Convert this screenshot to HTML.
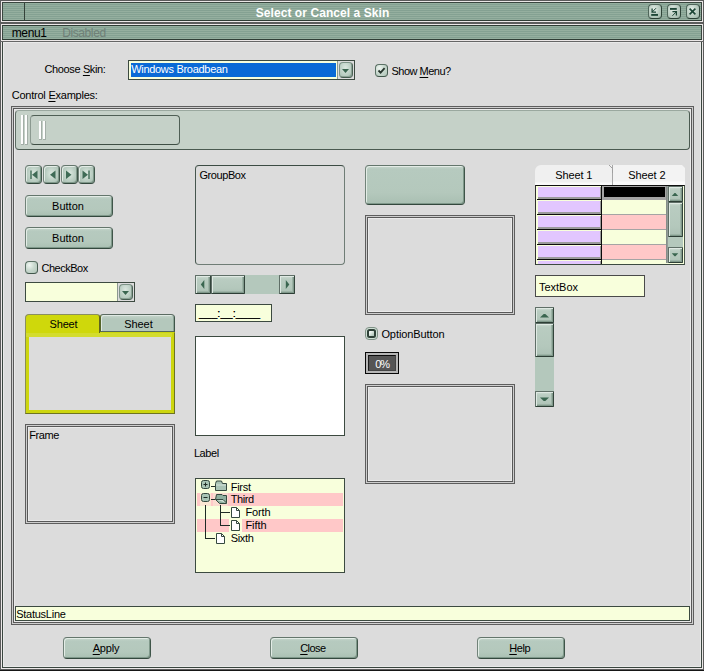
<!DOCTYPE html>
<html><head><meta charset="utf-8"><title>Select or Cancel a Skin</title>
<style>
html,body{margin:0;padding:0;}
body{width:704px;height:671px;position:relative;overflow:hidden;background:#dcdcdc;font-family:"Liberation Sans",sans-serif;font-size:11px;color:#000;}
.a{position:absolute;box-sizing:border-box;}
.t{position:absolute;white-space:nowrap;line-height:13px;height:13px;}
u{text-decoration:underline;text-underline-offset:1.5px;}
.stripe{background:repeating-linear-gradient(to bottom,#95af9f 0,#95af9f 1px,#84a192 1px,#84a192 2px);}
.btn{position:absolute;box-sizing:border-box;border-radius:4px;background:linear-gradient(to bottom,#c9d8cf 0,#b6cabf 3px,#b4c8bc 70%,#a9bfb2 100%);border:1px solid;border-color:#64766c #3f5549 #33483d #718379;box-shadow:inset 1px 1px 0 #e3ece6,inset -1px -1px 0 #7f988a;text-align:center;}
.dbl{position:absolute;box-sizing:border-box;border:1px solid #5e5e5e;box-shadow:inset 0 0 0 1px #cecece,inset 0 0 0 2px #595959,inset 0 0 0 3px #eaeaea;}
.sq{border-radius:1px;border-color:#5f6f67 #33443b #2d3e35 #5f6f67;box-shadow:inset 1px 1px 0 #dfe9e3,inset -1px -1px 0 #7f988a,inset -2px -2px 0 #9db3a6;background:linear-gradient(to bottom,#cfddd4 0,#b9ccc1 3px,#b4c8bc 70%,#abc0b4 100%);}
.chk{background:radial-gradient(ellipse at 32% 28%,#f0f6f2 0,#c9d9cf 45%,#b0c4b8 100%);border-color:#5b7165 #465c50 #40564a #5b7165;box-shadow:none;}
.dd{background:radial-gradient(ellipse at 45% 35%,#dce8e0 0,#bccfc4 55%,#a3baad 100%);border-color:#7d9387 #4b6155 #455b4f #7d9387;box-shadow:inset -1px -1px 0 #8aa194;}
.nav{background:radial-gradient(ellipse at 50% 45%,#dde9e1 0,#bccfc4 50%,#a3baad 100%);}
.tb{border-radius:4px;background:radial-gradient(ellipse at 40% 35%,#e4eee8 0,#bfd1c6 45%,#9cb5a7 100%);border-color:#4f665a #2f4439 #2a3f34 #4f665a;box-shadow:none;}
.ybox{position:absolute;box-sizing:border-box;background:#f8ffdc;border:1px solid #3c4a40;}
</style></head><body>

<!-- window borders -->
<div class="a" style="left:0;top:0;width:704px;height:671px;border:1px solid #5c5c5c;border-bottom-width:2px;"></div>
<div class="a" style="left:1px;top:1px;width:702px;height:668px;border:1px solid #ebe7e7;"></div>
<div class="a" style="left:2px;top:2px;width:700px;height:666px;border:1px solid #3a463f;"></div>

<!-- title bar -->
<div class="a stripe" style="left:3px;top:3px;width:698px;height:17px;"></div>
<div class="a" style="left:24px;top:3px;width:1px;height:17px;background:#34423a;"></div>
<div class="a" style="left:2px;top:20px;width:700px;height:1px;background:#2f3d35;"></div>
<div class="a" style="left:1px;top:21px;width:702px;height:1px;background:#ebe7e7;"></div>
<div class="a" style="left:1px;top:22px;width:702px;height:2px;background:#5c5c5c;"></div>
<div class="a" style="left:1px;top:24px;width:702px;height:1px;background:#ebe7e7;"></div>
<div class="a" style="left:2px;top:25px;width:700px;height:1px;background:#2f3d35;"></div>
<div class="a stripe" style="left:3px;top:26px;width:698px;height:13px;"></div>
<div class="a" style="left:2px;top:39px;width:700px;height:1px;background:#2f3d35;"></div>
<div class="a" style="left:1px;top:40px;width:702px;height:1px;background:#ebe7e7;"></div>
<div class="a" style="left:0;top:41px;width:704px;height:1px;background:#666;"></div>
<div class="a" style="left:3px;top:42px;width:698px;height:625px;border:1px solid #e9e9e9;"></div>
<div class="a" style="left:0;top:670px;width:704px;height:1px;background:#161616;"></div>
<div id="title" class="t" style="left:255.7px;top:6px;font-weight:bold;font-size:12px;color:#fff;line-height:15px;height:15px;letter-spacing:0.07px;">Select or Cancel a Skin</div>

<!-- title buttons -->
<div class="btn tb" style="left:647.7px;top:4.3px;width:14px;height:14.4px;"></div>
<div class="btn tb" style="left:666.7px;top:4.3px;width:14px;height:14.4px;"></div>
<div class="btn tb" style="left:685.5px;top:4.3px;width:14px;height:14.4px;"></div>
<svg class="a" style="left:644px;top:0;" width="60" height="24">
 <g stroke="#1d4636" fill="none" stroke-width="1">
  <path d="M12 8.2L8.1 12.1"/><path d="M8.1 8.4V12.2H12" stroke-width="1.3"/>
  <path d="M7.2 14.9H14" stroke-width="1.9"/>
  <path d="M26 8.9H32.8" stroke-width="1.9"/>
  <path d="M28.400 15.800L32.3 11.800"/><path d="M28.400 11.700H32.400V15.600" stroke-width="1.3"/>
  <path d="M45.600 8.600L51.400 14.400M51.400 8.600L45.600 14.400" stroke-width="1.6"/>
 </g>
</svg>

<!-- menu -->
<div id="menu1" class="t" style="left:11.7px;top:27px;font-size:12px;letter-spacing:-0.34px;">menu1</div>
<div id="menu2" class="t" style="left:62.2px;top:27px;font-size:12px;color:#6f7f77;letter-spacing:-0.40px;">Disabled</div>


<!-- top row -->
<div id="l_choose" class="t" style="left:44.5px;top:63px;letter-spacing:-0.37px;">Choose <u>S</u>kin:</div>
<div class="a" style="left:128px;top:60px;width:227px;height:20px;border:1px solid #3c4a40;background:#dcdcdc;"></div>
<div class="a" style="left:129px;top:61px;width:208px;height:18px;background:#f8ffdc;"></div>
<div class="a" style="left:337px;top:61px;width:1px;height:18px;background:#8c9890;"></div>
<div class="a" style="left:131px;top:63px;width:205px;height:14px;background:#0a6ad6;"></div>
<div id="l_win" class="t" style="left:131.2px;top:63px;color:#fff;letter-spacing:-0.30px;">Windows Broadbean</div>
<div class="btn dd" style="left:339px;top:62px;width:14px;height:16px;"></div>
<svg class="a" style="left:342px;top:69px;" width="7" height="4"><path d="M0 0H7L3.5 4Z" fill="#3a6650"/></svg>
<div class="btn chk" style="left:375px;top:64px;width:13px;height:13px;border-radius:4px;"></div>
<svg class="a" style="left:377px;top:66px;" width="9" height="9"><path d="M1.500 4.500L3.600 6.600L7.600 2.200" stroke="#26342c" stroke-width="1.8" fill="none"/></svg>
<div id="l_show" class="t" style="left:391.5px;top:65px;letter-spacing:-0.50px;">Show <u>M</u>enu?</div>
<div id="l_ctrl" class="t" style="left:11.7px;top:89px;letter-spacing:-0.23px;">Control <u>E</u>xamples:</div>

<!-- big frame -->
<div class="dbl" style="left:11px;top:106px;width:683px;height:519px;"></div>

<!-- toolbar -->
<div class="a" style="left:15px;top:110px;width:675px;height:40px;border-radius:4px;background:#c5d1c8;border:1px solid;border-color:#9aa89f #4a5a50 #4a5a50 #5d6d63;"></div>
<div class="a" style="left:21px;top:115px;width:3px;height:30px;background:#a3aea7;"></div><div class="a" style="left:21px;top:115px;width:2px;height:29px;background:#fdfdfd;"></div>
<div class="a" style="left:25px;top:115px;width:3px;height:30px;background:#a3aea7;"></div><div class="a" style="left:25px;top:115px;width:2px;height:29px;background:#fdfdfd;"></div>
<div class="a" style="left:30px;top:115px;width:150px;height:30px;border-radius:4px;border:1px solid;border-color:#4f5f55 #4f5f55 #3f4f45 #8b9990;"></div>
<div class="a" style="left:39px;top:121px;width:3px;height:19px;background:#a3aea7;"></div><div class="a" style="left:39px;top:121px;width:2px;height:18px;background:#fdfdfd;"></div>
<div class="a" style="left:43px;top:121px;width:3px;height:19px;background:#a3aea7;"></div><div class="a" style="left:43px;top:121px;width:2px;height:18px;background:#fdfdfd;"></div>

<!-- status -->
<div class="ybox" style="left:15px;top:606px;width:675px;height:15px;"></div>
<div id="l_status" class="t" style="left:16.2px;top:608px;letter-spacing:-0.25px;">StatusLine</div>

<!-- bottom buttons -->
<div class="btn" style="left:63px;top:637px;width:88px;height:22px;"></div><div id="l_apply" class="t" style="left:92.7px;top:642px;letter-spacing:-0.21px;"><u>A</u>pply</div>
<div class="btn" style="left:270px;top:637px;width:88px;height:22px;"></div><div id="l_close" class="t" style="left:300.2px;top:642px;letter-spacing:-0.53px;"><u>C</u>lose</div>
<div class="btn" style="left:477px;top:637px;width:88px;height:22px;"></div><div id="l_help" class="t" style="left:509.3px;top:642px;letter-spacing:-0.46px;"><u>H</u>elp</div>


<!-- left column -->
<div class="btn nav" style="left:25px;top:165px;width:17px;height:19px;"></div>
<div class="btn nav" style="left:43px;top:165px;width:17px;height:19px;"></div>
<div class="btn nav" style="left:61px;top:165px;width:17px;height:19px;"></div>
<div class="btn nav" style="left:78px;top:165px;width:17px;height:19px;"></div>
<svg class="a" style="left:25px;top:165px;" width="70" height="19">
 <g fill="#3f6b56">
  <rect x="5.300" y="5.500" width="1.4" height="8.500"/><path d="M12.500 5.500V14L7 9.750Z"/>
  <path d="M30.500 5.500V14L25 9.750Z"/>
  <path d="M41 5.500V14L46.500 9.750Z"/>
  <path d="M57.500 5.500V14L63 9.750Z"/><rect x="63.300" y="5.500" width="1.4" height="8.500"/>
 </g>
</svg>
<div class="btn" style="left:25px;top:195px;width:88px;height:22px;"></div><div id="l_b1" class="t" style="left:52.1px;top:200px;letter-spacing:-0.00px;">Button</div>
<div class="btn" style="left:25px;top:227px;width:88px;height:22px;"></div><div id="l_b2" class="t" style="left:52.1px;top:232px;letter-spacing:-0.00px;">Button</div>
<div class="btn chk" style="left:25px;top:261px;width:13px;height:13px;border-radius:4px;"></div>
<div id="l_cb" class="t" style="left:41.5px;top:262px;letter-spacing:-0.49px;">CheckBox</div>
<div class="a" style="left:25px;top:282px;width:110px;height:20px;border:1px solid #3c4a40;background:#dcdcdc;"></div>
<div class="a" style="left:26px;top:283px;width:91px;height:18px;background:#f8ffdc;"></div>
<div class="a" style="left:117px;top:283px;width:1px;height:18px;background:#8c9890;"></div>
<div class="btn dd" style="left:119px;top:284px;width:14px;height:16px;"></div>
<svg class="a" style="left:122px;top:291px;" width="7" height="4"><path d="M0 0H7L3.5 4Z" fill="#3a6650"/></svg>

<!-- tab control -->
<div class="a" style="left:25px;top:332px;width:150px;height:82px;background:#cdd60f;border:1px solid;border-color:#cdd60f #6e7420 #6e7420 #8a8f50;"></div>
<div class="a" style="left:26px;top:333px;width:146px;height:4px;background:#d3dc2e;"></div>
<div class="a" style="left:29px;top:337px;width:142px;height:73px;background:#dcdcdc;"></div>
<div class="a" style="left:25px;top:314px;width:75px;height:19px;background:#cfd80b;border-radius:4px 3px 0 0;border:1px solid;border-color:#8a8f60 #5f6420 transparent #8a8f60;border-bottom:none;"></div>
<div class="a" style="left:100px;top:314px;width:75px;height:18px;background:linear-gradient(to bottom,#c6d6cc,#b4c8bc 4px,#b4c8bc);border-radius:3px 4px 0 0;border:1px solid;border-color:#5b6b62 #3f5549 #55695e #55652a;box-shadow:inset 1px 1px 0 #dfe9e3,inset -1px 0 0 #8ea598;"></div>
<div id="l_s1" class="t" style="left:49.5px;top:318px;letter-spacing:-0.15px;">Sheet</div>
<div id="l_s2" class="t" style="left:124.2px;top:318px;letter-spacing:-0.05px;">Sheet</div>

<!-- frame -->
<div class="dbl" style="left:25px;top:424px;width:150px;height:100px;"></div>
<div id="l_frame" class="t" style="left:29.2px;top:429px;letter-spacing:-0.41px;">Frame</div>

<!-- middle column -->
<div class="a" style="left:195px;top:165px;width:150px;height:100px;border-radius:4px;border:1px solid;border-color:#3c4c44 #6f7d76 #6f7d76 #46564e;"></div>
<div id="l_gb" class="t" style="left:199.4px;top:169px;letter-spacing:-0.41px;">GroupBox</div>
<div class="a" style="left:195px;top:275px;width:100px;height:19px;background:#b4c8bc;"></div>
<div class="btn sq" style="left:195px;top:275px;width:16px;height:19px;"></div>
<div class="btn sq" style="left:211px;top:275px;width:34px;height:19px;"></div>
<div class="btn sq" style="left:279px;top:275px;width:16px;height:19px;"></div>
<svg class="a" style="left:195px;top:275px;" width="100" height="19"><g fill="#3a6650"><path d="M9.300 5V14L5.800 9.500Z"/><path d="M90.800 5V14L94.300 9.500Z"/></g></svg>
<div class="ybox" style="left:195px;top:304px;width:77px;height:18px;"></div>
<div id="l_mask" class="t" style="left:199px;top:307px;letter-spacing:0;text-shadow:0 0.4px 0 #000;">___:__:____</div>
<div class="a" style="left:195px;top:336px;width:150px;height:100px;background:#fff;border:1px solid #3c4a40;"></div>
<div id="l_label" class="t" style="left:193.9px;top:447px;letter-spacing:-0.43px;">Label</div>

<!-- tree -->
<div class="ybox" style="left:195px;top:478px;width:150px;height:95px;"></div>
<div class="a" style="left:197px;top:493px;width:146px;height:13px;background:#ffc8c8;"></div>
<div class="a" style="left:197px;top:519px;width:146px;height:13px;background:#ffc8c8;"></div>
<div class="a" style="left:200px;top:493px;width:11px;height:13px;background:#fbe6d2;"></div>
<div class="a" style="left:213px;top:493px;width:15px;height:13px;background:#fbdcd0;"></div>
<div class="a" style="left:229px;top:519px;width:13px;height:13px;background:#f8ffdc;"></div>
<svg class="a" style="left:195px;top:478px;" width="150" height="95">
 <g stroke="#1f2b25" stroke-width="1" fill="none" shape-rendering="crispEdges">
  <path d="M10.5 27V60.5H20"/><path d="M25.500 27V47.500H35M25.500 34.500H35"/>
  <path d="M16 8.5H20M16 21.5H20"/>
 </g>
 <g stroke="#35493f" stroke-width="1">
  <rect x="6.5" y="2.5" width="8" height="8" rx="2" fill="#a9c4b5"/>
  <rect x="6.5" y="15.5" width="8" height="8" rx="2" fill="#a9c4b5"/>
  <path d="M8.5 6.5H12.5M10.5 4.5V8.5M8.5 19.5H12.5" stroke="#1f2b25" fill="none"/>
  <path d="M20.500 5.500L21.500 3H26.500L27.500 5.500H31.500V12.500H20.500Z" fill="#a9c4b5"/><path d="M21 7H31" stroke="#d5e4db" fill="none"/>
  <path d="M21.5 16.5H27L28 17.5H31.5V25.5H24.5L20.5 21.5Z" fill="#8fb09f"/><path d="M20.5 21.5H28L31.5 25" fill="#cfe0d6"/>
  <g fill="#fff"><path d="M36.500 29.500H41.5L44.500 32.500V39.500H36.500Z"/><path d="M41.500 29.500V32.500H44.500" fill="none"/></g>
  <g fill="#fff"><path d="M36.500 42.500H41.5L44.500 45.500V52.500H36.500Z"/><path d="M41.500 42.500V45.500H44.500" fill="none"/></g>
  <g fill="#fff"><path d="M21.500 55.500H26.5L29.500 58.500V65.500H21.500Z"/><path d="M26.500 55.500V58.500H29.500" fill="none"/></g>
 </g>
</svg>
<div id="l_t1" class="t" style="left:230.7px;top:481px;letter-spacing:-0.28px;">First</div>
<div id="l_t2" class="t" style="left:230.7px;top:493px;letter-spacing:-0.43px;">Third</div>
<div id="l_t3" class="t" style="left:245.4px;top:506px;letter-spacing:-0.09px;">Forth</div>
<div id="l_t4" class="t" style="left:245.4px;top:519px;letter-spacing:-0.03px;">Fifth</div>
<div id="l_t5" class="t" style="left:230.7px;top:532px;letter-spacing:-0.31px;">Sixth</div>


<!-- third column -->
<div class="btn" style="left:365px;top:165px;width:100px;height:40px;"></div>
<div class="dbl" style="left:365px;top:215px;width:150px;height:100px;"></div>
<div class="a" style="left:365px;top:327px;width:13px;height:13px;border-radius:4px;background:#cfdfd5;border:1px solid #7f9186;"></div>
<div class="a" style="left:367px;top:329px;width:9px;height:9px;border-radius:2.5px;background:linear-gradient(135deg,#f2f8f4 20%,#b8ccc0 80%);border:2px solid #2f4238;"></div>
<div id="l_opt" class="t" style="left:381.4px;top:328px;letter-spacing:-0.08px;">OptionButton</div>
<div class="a" style="left:365px;top:352px;width:34px;height:22px;background:#b6b6b6;border:1px solid #080808;"></div>
<div class="a" style="left:368px;top:355px;width:28px;height:16px;background:#555;border:1px solid;border-color:#0c0c0c #444 #444 #1c1c1c;"></div>
<div id="l_pct" class="t" style="left:375.3px;top:358px;color:#fff;letter-spacing:-1.05px;">0%</div>
<div class="dbl" style="left:365px;top:384px;width:150px;height:100px;"></div>

<!-- fourth column: sheet tabs + grid -->
<div class="a" style="left:535px;top:165px;width:78px;height:20px;background:linear-gradient(to bottom,#f0f0f0 0,#f0f0f0 17px,#fafafa 18px);border-radius:6px 0 0 0;border-right:1px solid #a8a8a8;"></div>
<div class="a" style="left:613px;top:165px;width:71.500px;height:20px;background:linear-gradient(to bottom,#f3f3f3 0,#f3f3f3 16px,#fbfbfb 17px);"></div>
<svg class="a" style="left:606px;top:165px;" width="9" height="8"><path d="M3 0L6.500 3.500V8" stroke="#a0a0a0" fill="none"/></svg>
<svg class="a" style="left:677px;top:165px;" width="8" height="8"><path d="M5 0L8 3V0Z" fill="#dcdcdc"/></svg>
<div id="l_sh1" class="t" style="left:555.3px;top:169px;letter-spacing:-0.15px;">Sheet 1</div>
<div id="l_sh2" class="t" style="left:628.2px;top:169px;letter-spacing:-0.10px;">Sheet 2</div>

<div class="a" style="left:535px;top:185px;width:150px;height:80px;background:#f8ffdc;border:1px solid;border-color:#101010 #4a584e #3c4a40 #303030;overflow:hidden;">
<div class="a" style="left:2px;top:1px;width:64px;height:12px;background:#e2c6ff;border-right:2px solid #9a9a9a;border-bottom:2px solid #9a9a9a;"></div>
<div class="a" style="left:1px;top:13px;width:65px;height:1px;background:#0c0c0c;"></div>
<div class="a" style="left:66px;top:0px;width:65px;height:13px;background:#000;border:2px solid #a4a4a4;border-top-width:1px;"></div>
<div class="a" style="left:66px;top:13px;width:65px;height:1px;background:#a4a4a4;"></div>
<div class="a" style="left:2px;top:15px;width:64px;height:13px;background:#e2c6ff;border-right:2px solid #9a9a9a;border-bottom:2px solid #9a9a9a;"></div>
<div class="a" style="left:1px;top:28px;width:65px;height:1px;background:#0c0c0c;"></div>
<div class="a" style="left:66px;top:14px;width:65px;height:14px;background:#f8ffdc;"></div>
<div class="a" style="left:66px;top:28px;width:65px;height:1px;background:#a4a4a4;"></div>
<div class="a" style="left:2px;top:30px;width:64px;height:13px;background:#e2c6ff;border-right:2px solid #9a9a9a;border-bottom:2px solid #9a9a9a;"></div>
<div class="a" style="left:1px;top:43px;width:65px;height:1px;background:#0c0c0c;"></div>
<div class="a" style="left:66px;top:29px;width:65px;height:14px;background:#ffc8c8;"></div>
<div class="a" style="left:66px;top:43px;width:65px;height:1px;background:#a4a4a4;"></div>
<div class="a" style="left:2px;top:45px;width:64px;height:13px;background:#e2c6ff;border-right:2px solid #9a9a9a;border-bottom:2px solid #9a9a9a;"></div>
<div class="a" style="left:1px;top:58px;width:65px;height:1px;background:#0c0c0c;"></div>
<div class="a" style="left:66px;top:44px;width:65px;height:14px;background:#f8ffdc;"></div>
<div class="a" style="left:66px;top:58px;width:65px;height:1px;background:#a4a4a4;"></div>
<div class="a" style="left:2px;top:60px;width:64px;height:13px;background:#e2c6ff;border-right:2px solid #9a9a9a;border-bottom:2px solid #9a9a9a;"></div>
<div class="a" style="left:1px;top:73px;width:65px;height:1px;background:#0c0c0c;"></div>
<div class="a" style="left:66px;top:59px;width:65px;height:14px;background:#ffc8c8;"></div>
<div class="a" style="left:66px;top:73px;width:65px;height:1px;background:#a4a4a4;"></div>
<div class="a" style="left:2px;top:75px;width:64px;height:13px;background:#e2c6ff;border-right:2px solid #9a9a9a;border-bottom:2px solid #9a9a9a;"></div>
<div class="a" style="left:1px;top:88px;width:65px;height:1px;background:#0c0c0c;"></div>
<div class="a" style="left:66px;top:74px;width:65px;height:14px;background:#f8ffdc;"></div>
<div class="a" style="left:66px;top:88px;width:65px;height:1px;background:#a4a4a4;"></div>
<div class="a" style="left:65px;top:0;width:1px;height:80px;background:#0c0c0c;"></div>
<div class="a" style="left:130px;top:0;width:2px;height:77px;background:linear-gradient(to right,#7f8783,#9aa29e);"></div>
<div class="a" style="left:132px;top:0;width:14.600px;height:77px;background:#b4c8bc;"></div>
<div class="btn sq" style="left:132px;top:0px;width:14.600px;height:15.500px;"></div>
<div class="btn sq" style="left:132px;top:16px;width:14.600px;height:35px;"></div>
<div class="btn sq" style="left:132px;top:60.500px;width:14.600px;height:16px;"></div>
<svg class="a" style="left:132px;top:0;" width="14" height="77"><g fill="#3a6650"><path d="M3.800 10H10.200L7.500 7H6.500Z"/><path d="M3.800 67.300H10.200L7.500 70.300H6.500Z"/></g></svg>
</div>

<div class="ybox" style="left:535px;top:275px;width:110px;height:22px;border-color:#4a4a4a;"></div>
<div id="l_tb" class="t" style="left:539.0px;top:281px;letter-spacing:-0.02px;">TextBox</div>

<div class="a" style="left:535px;top:307px;width:19px;height:100px;background:#b4c8bc;"></div>
<div class="btn sq" style="left:535px;top:307px;width:19px;height:16px;"></div>
<div class="btn sq" style="left:535px;top:323px;width:19px;height:34px;"></div>
<div class="btn sq" style="left:535px;top:391px;width:19px;height:16px;"></div>
<svg class="a" style="left:535px;top:307px;" width="19" height="100"><g fill="#3a6650"><path d="M5 10.400H14L10.300 7H8.700Z"/><path d="M5 90.600H14L10.300 94H8.700Z"/></g></svg>

</body></html>
